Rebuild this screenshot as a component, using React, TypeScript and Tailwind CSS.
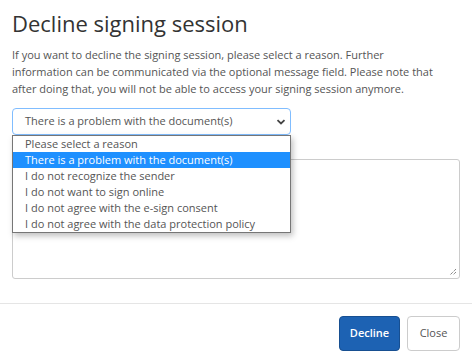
import React from "react";

export default function App() {
  const options = [
    "Please select a reason",
    "There is a problem with the document(s)",
    "I do not recognize the sender",
    "I do not want to sign online",
    "I do not agree with the e-sign consent",
    "I do not agree with the data protection policy",
  ];
  return (
    <div
      className="w-[472px] h-[361px] bg-white text-[#333] overflow-hidden"
      style={{ fontFamily: '"Open Sans", "Noto Sans", sans-serif' }}
    >
      <div className="px-3 pt-[8px]">
        <h1 className="text-[22px] leading-[30px] text-[#333] font-normal">Decline signing session</h1>
      </div>
      <div className="px-3 pt-[8px]">
        <p className="text-[11px] leading-[17px] text-[#555]">
          If you want to decline the signing session, please select a reason. Further
          <br />
          information can be communicated via the optional message field. Please note that
          <br />
          after doing that, you will not be able to access your signing session anymore.
        </p>
        <div className="relative mt-[11px] w-[279px]">
          <div className="h-[27px] border border-[#80bdff] rounded-[4px] flex items-center justify-between pl-3 pr-[4px] text-[11px] text-[#555]">
            <span>There is a problem with the document(s)</span>
            <svg width="10" height="8" viewBox="0 0 10 8">
              <path d="M1.5 2.2 L5 5.5 L8.5 2.2" fill="none" stroke="#444" strokeWidth="1.8" />
            </svg>
          </div>
          <div className="absolute left-0 top-[27px] w-[279px] bg-white border border-[#767676] shadow-[2px_3px_6px_rgba(0,0,0,0.25)] z-10">
            {options.map((o, i) => (
              <div
                key={o}
                className={
                  "h-[16px] leading-[16px] pl-3 text-[11px] " +
                  (i === 1 ? "bg-[#1e90ff] text-white" : "text-[#555]")
                }
              >
                {o}
              </div>
            ))}
          </div>
        </div>
        <div className="mt-[24px] h-[120px] border border-[#ccc] rounded-[3px] relative">
          <svg width="8" height="8" viewBox="0 0 8 8" className="absolute right-[2px] bottom-[2px]">
            <path d="M7 1 L1 7 M7 4 L4 7" stroke="#555" strokeWidth="1" strokeDasharray="1 1" />
          </svg>
        </div>
      </div>
      <div className="mt-[24px] border-t border-[#e5e5e5] flex justify-end gap-[7px] px-3 pt-[12px]">
        <button className="h-[35px] w-[61px] rounded-[4px] bg-[#1d62b3] border border-[#174f91] text-white text-[11px] font-semibold">
          Decline
        </button>
        <button className="h-[35px] w-[53px] rounded-[4px] bg-white border border-[#ccc] text-[#555] text-[11px]">
          Close
        </button>
      </div>
    </div>
  );
}
